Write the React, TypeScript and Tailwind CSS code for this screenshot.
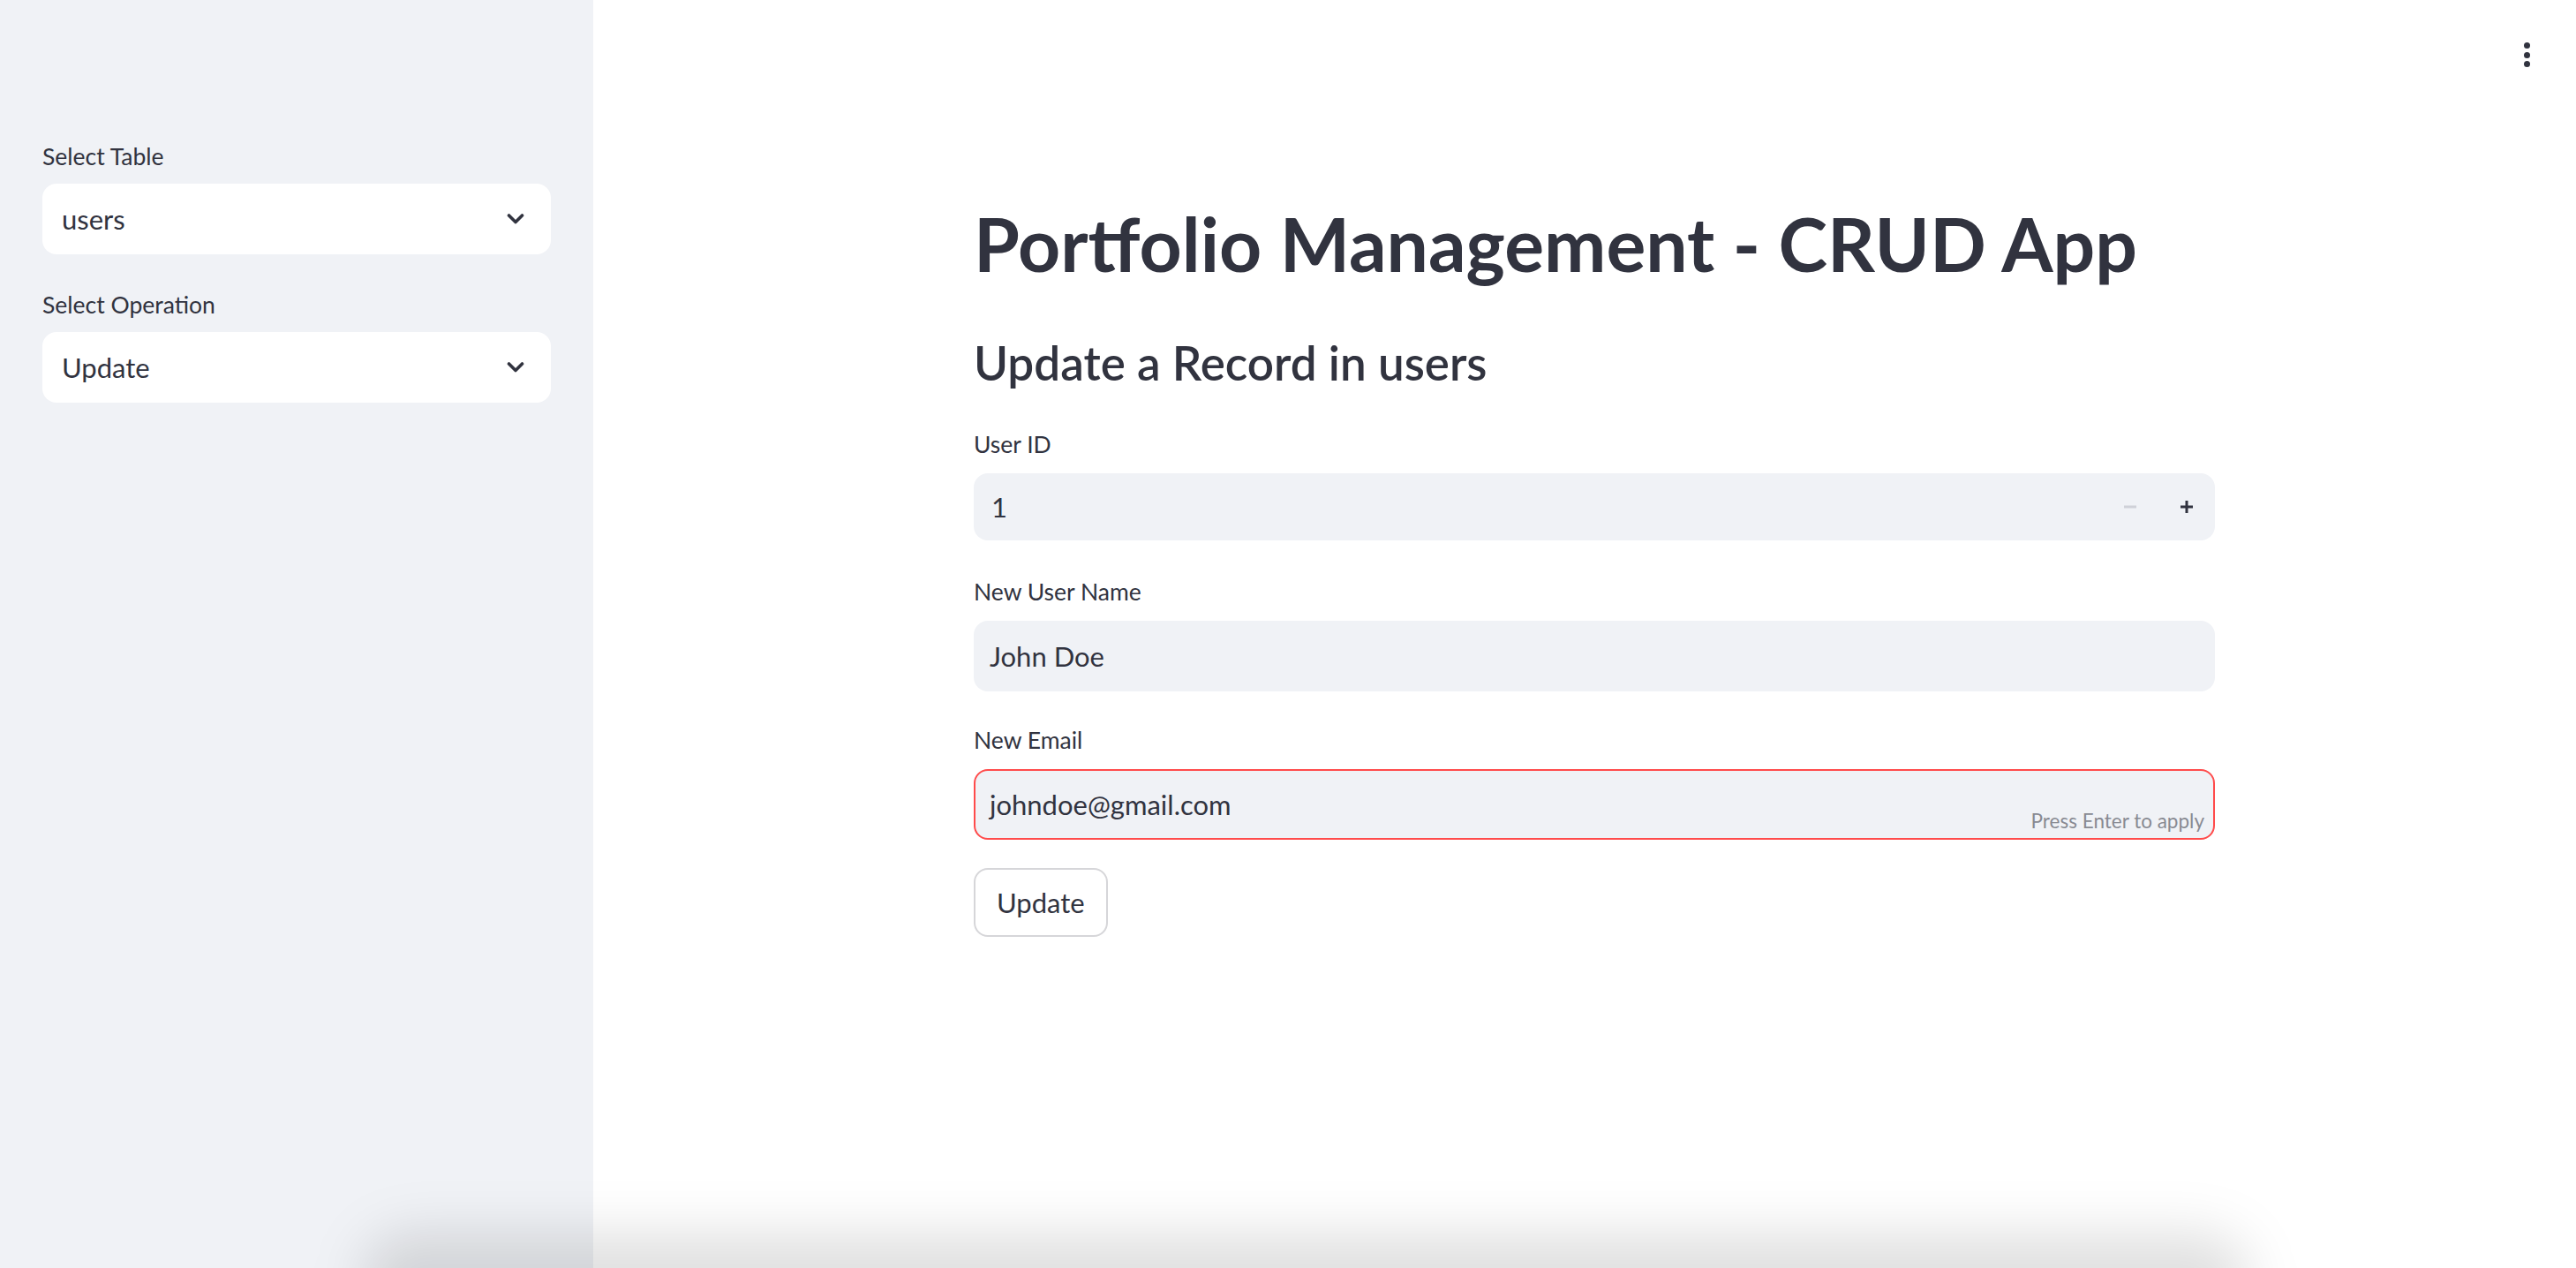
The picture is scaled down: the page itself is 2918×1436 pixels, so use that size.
import { ReactNode } from 'react';

const font = { fontFamily: 'Lato, "Noto Sans", sans-serif' };

function Chevron() {
  return (
    <svg width="20" height="14" viewBox="0 0 20 14" fill="none">
      <path d="M2.5 3l7.5 7.5L17.5 3" stroke="#31333f" strokeWidth="3.6" strokeLinecap="round" strokeLinejoin="round" />
    </svg>
  );
}

function Label({ children, className = '' }: { children: ReactNode; className?: string }) {
  return <div className={`flex h-[48px] items-center pt-[3px] text-[26.5px] text-[#31333f] ${className}`}>{children}</div>;
}

function SideSelect({ label, value }: { label: string; value: string }) {
  return (
    <div>
      <Label className="mb-[8px]">{label}</Label>
      <div className="flex h-[80px] items-center justify-between rounded-[16px] bg-white pl-[22px] pr-[30px] text-[31px] text-[#31333f]">
        <span>{value}</span>
        <Chevron />
      </div>
    </div>
  );
}

export default function App() {
  return (
    <div className="relative flex h-screen w-full overflow-hidden bg-white" style={font}>
      <aside className="flex w-[672px] shrink-0 flex-col gap-[32px] bg-[#f0f2f6] px-[48px] pt-[152px]">
        <SideSelect label="Select Table" value="users" />
        <SideSelect label="Select Operation" value="Update" />
      </aside>

      <main className="flex-1 pl-[431px] pt-[226px]">
        <div className="flex w-[1406px] flex-col text-[#31333f]">
          <h1 className="text-[84px] font-bold leading-[1.2]">Portfolio Management - CRUD App</h1>
          <h3 className="mt-[52px] text-[53px] font-semibold leading-[1.2]">Update a Record in users</h3>

          <Label className="mt-[36px] mb-[10px]">User ID</Label>
          <div className="flex h-[76px] items-center rounded-[16px] bg-[#f0f2f6] text-[31px]">
            <span className="flex-1 pl-[20px]">1</span>
            <div className="flex h-full w-[64px] items-center justify-center">
              <svg width="16" height="16" viewBox="0 0 16 16">
                <rect x="1" y="6.5" width="14" height="3" fill="#cfd1d8" />
              </svg>
            </div>
            <div className="flex h-full w-[64px] items-center justify-center">
              <svg width="16" height="16" viewBox="0 0 16 16">
                <rect x="1" y="6.5" width="14" height="3" fill="#31333f" />
                <rect x="6.5" y="1" width="3" height="14" fill="#31333f" />
              </svg>
            </div>
          </div>

          <Label className="mt-[33px] mb-[10px]">New User Name</Label>
          <div className="flex h-[80px] items-center rounded-[16px] bg-[#f0f2f6] pl-[18px] text-[31px]">John Doe</div>

          <Label className="mt-[30px] mb-[10px]">New Email</Label>
          <div className="relative flex h-[80px] items-center rounded-[16px] border-2 border-[#ff4b4b] bg-[#f0f2f6] pl-[16px] text-[31px]">
            <span>johndoe@gmail.com</span>
            <span className="absolute bottom-[3px] right-[10px] text-[22.5px] text-[#888a92]">Press Enter to apply</span>
          </div>

          <div className="mt-[32px]">
            <button className="h-[78px] rounded-[16px] border-2 border-[#d6d6d9] bg-white px-[24px] text-[31px] text-[#31333f]">
              Update
            </button>
          </div>
        </div>
      </main>

      <div className="absolute right-[52px] top-[48px] flex flex-col items-center gap-[3.5px]">
        <span className="h-[7px] w-[7px] rounded-full bg-[#31333f]" />
        <span className="h-[7px] w-[7px] rounded-full bg-[#31333f]" />
        <span className="h-[7px] w-[7px] rounded-full bg-[#31333f]" />
      </div>

      <div className="pointer-events-none absolute bottom-[-70px] left-[410px] right-[370px] h-[110px] rounded-[60px] bg-[#0000001f] blur-[30px]" />
    </div>
  );
}
